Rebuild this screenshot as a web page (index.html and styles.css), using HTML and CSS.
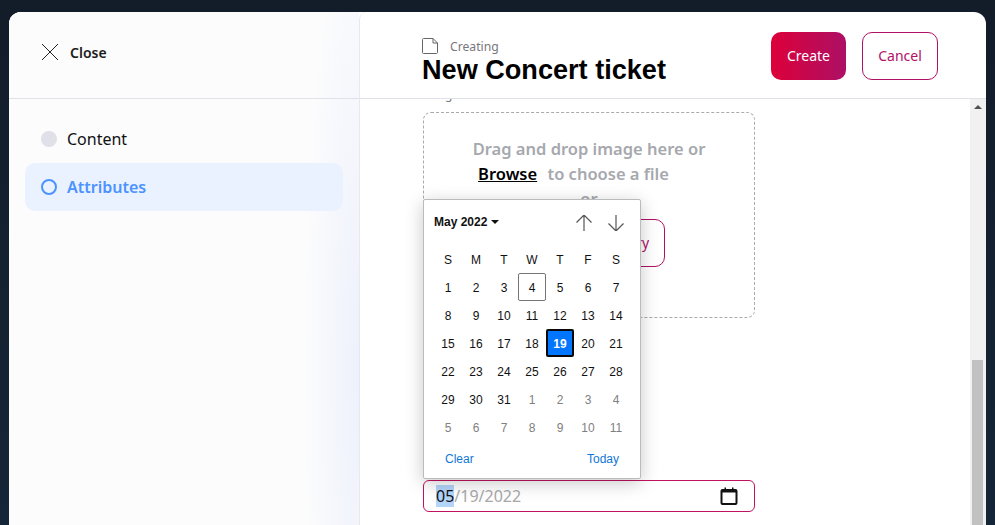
FILE: index.html
```html
<!DOCTYPE html>
<html lang="en">
<head>
	<meta charset="UTF-8">
	<title>New Concert ticket</title>
	<link rel="stylesheet" href="styles.css">
</head>
<body>
	<div class="panel">
		<div class="side">
			<div class="side-head">
				<svg class="close-icon" width="18" height="18" viewBox="0 0 18 18"><path d="M1 1L17 17M17 1L1 17" stroke="#222" stroke-width="1" fill="none"/></svg>
				<span class="close-text">Close</span>
			</div>
			<div class="steps">
				<div class="step"><i class="dot"></i>Content</div>
				<div class="step active"><i class="dot"></i>Attributes</div>
			</div>
		</div>
		<div class="main">
			<div class="main-head">
				<div class="title-box">
					<div class="crumb">
						<svg width="16" height="16" viewBox="0 0 16 16"><path d="M1.5 .5H11L15.5 5V14.5a1 1 0 0 1-1 1H1.5a1 1 0 0 1-1-1V1.500a1 1 0 0 1 1-1ZM11 .5V5H15.5" stroke="#666" fill="#fff"/></svg>
						<span>Creating</span>
					</div>
					<h1>New Concert ticket</h1>
				</div>
				<button class="btn btn-create">Create</button>
				<button class="btn btn-cancel">Cancel</button>
			</div>
			<div class="main-body">
				<div class="form">
					<div class="field-label">Image</div>
					<div class="drop">
						<p>Drag and drop image here or</p>
						<p class="browse-line"><a>Browse</a> to choose a file</p>
						<p>or</p>
						<button class="btn btn-cancel btn-library">Select from library</button>
					</div>
					<div class="date-wrap">
						<div class="date-input">
							<span class="date-val"><b>05</b>/19/2022</span>
							<svg width="18" height="18" viewBox="0 0 18 18"><path d="M2.500 3H15.500A1 1 0 0 1 16.500 4V16A1 1 0 0 1 15.500 17H2.500A1 1 0 0 1 1.500 16V4A1 1 0 0 1 2.500 3Z" stroke="#111" stroke-width="2" fill="#fff"/><path d="M1.500 3H16.500V5.500H1.500ZM4.500 .5H6V3H4.500ZM12 .5H13.500V3H12Z" fill="#111"/></svg>
						</div>
						<div class="picker">
							<div class="picker-head">
								<span class="month">May 2022 <i class="caret"></i></span>
								<svg width="16" height="16" viewBox="0 0 16 16"><path d="M8 0V16M.5 7.500L8 0L15.500 7.500" stroke="#555" stroke-width="1.200" fill="none"/></svg>
								<svg width="16" height="16" viewBox="0 0 16 16"><path d="M8 0V16M.5 8.500L8 16L15.500 8.500" stroke="#555" stroke-width="1.200" fill="none"/></svg>
							</div>
							<div class="cal">
								<span>S</span><span>M</span><span>T</span><span>W</span><span>T</span><span>F</span><span>S</span>
								<span>1</span><span>2</span><span>3</span><span class="now">4</span><span>5</span><span>6</span><span>7</span>
								<span>8</span><span>9</span><span>10</span><span>11</span><span>12</span><span>13</span><span>14</span>
								<span>15</span><span>16</span><span>17</span><span>18</span><span class="sel">19</span><span>20</span><span>21</span>
								<span>22</span><span>23</span><span>24</span><span>25</span><span>26</span><span>27</span><span>28</span>
								<span>29</span><span>30</span><span>31</span><span class="off">1</span><span class="off">2</span><span class="off">3</span><span class="off">4</span>
								<span class="off">5</span><span class="off">6</span><span class="off">7</span><span class="off">8</span><span class="off">9</span><span class="off">10</span><span class="off">11</span>
							</div>
							<div class="picker-foot"><a>Clear</a><a>Today</a></div>
						</div>
					</div>
				</div>
				<div class="scrollbar"><i class="arrow"></i><i class="thumb"></i></div>
			</div>
		</div>
	</div>
</body>
</html>
```
FILE: styles.css
```css
*{
	margin:0;
	padding:0;
	box-sizing:border-box;
}
html,body{
	width:100%;
	height:100%;
}
body{
	background:linear-gradient(#131c29,#152638);
	overflow:hidden;
	padding:12px 9px 0;
	font-family:"Noto Sans",sans-serif;
}
.panel{
	display:flex;
	height:100%;
	background:#fff;
	border-radius:12px 12px 0 0;
	overflow:hidden;
}
.side{
	width:350px;
	flex:none;
	background:radial-gradient(ellipse 55px 480px at 100% 70%,#edf1fb,#fcfcfd) #fcfcfd;
}
.side-head{
	height:87px;
	border-bottom:1px solid #e1e1ec;
	display:flex;
	align-items:center;
	padding:0 0 6px 32px;
}
.close-text{
	margin-left:11px;
	font-size:14px;
	font-weight:600;
	color:#1c1c1c;
}
.steps{
	padding:16px 16px 0 16px;
	display:flex;
	flex-direction:column;
}
.step{
	height:48px;
	display:flex;
	align-items:center;
	padding-left:16px;
	font-size:16px;
	color:#111;
	border-radius:10px;
}
.dot{
	width:16px;
	height:16px;
	border-radius:50%;
	background:#e0e0e8;
	margin-right:10px;
}
.step.active{
	background:#e9f2fe;
	color:#4c93ff;
	font-weight:600;
}
.step.active .dot{
	background:none;
	border:2px solid #4c93ff;
}
.main{
	flex:1;
	min-width:0;
	display:flex;
	flex-direction:column;
	border-left:1px solid #e8e8f2;
	border-top-left-radius:8px;
}
.main-head{
	height:87px;
	flex:none;
	border-bottom:1px solid #e1e1ec;
	display:flex;
	align-items:flex-start;
	padding:20px 48px 0 62px;
}
.title-box{
	flex:1;
	padding-top:6px;
}
.crumb{
	display:flex;
	align-items:center;
	gap:12px;
	height:16px;
	font-size:12.200px;
	color:#77777c;
}
.crumb svg{
	flex:none;
}
h1{
	font-family:"Liberation Sans",Arial,sans-serif;
	font-size:27.100px;
	line-height:30px;
	margin-top:1px;
	font-weight:700;
	color:#000;
}
.btn{
	height:48px;
	border-radius:10px;
	font-family:"Noto Sans",sans-serif;
	font-size:14px;
	padding-bottom:2px;
	background:#fff;
	border:1px solid #b01065;
	color:#b01065;
}
.btn-create{
	width:75px;
	border:0;
	color:#fff;
	background:linear-gradient(90deg,#dd0039,#ad1066);
}
.btn-cancel{
	width:76px;
	margin-left:16px;
}
.main-body{
	flex:1;
	min-height:0;
	display:flex;
	overflow:hidden;
}
.form{
	flex:1;
	min-width:0;
	padding-left:63px;
	margin-top:-11px;
}
.field-label{
	width:332px;
	height:24px;
	font-size:12px;
	line-height:14px;
	color:#77777c;
}
.drop{
	width:332px;
	height:206px;
	border:1px dashed #aaa;
	border-radius:8px;
	padding-top:23px;
	text-align:center;
	font-size:16.500px;
	font-weight:600;
	line-height:25px;
	color:#a6a8ae;
}
.browse-line{
	padding-right:31px;
}
.drop a{
	color:#000;
	text-decoration:underline;
	margin-right:6px;
}
.btn-library{
	display:block;
	width:152px;
	margin:8px auto 0;
	font-weight:400;
}
.date-wrap{
	position:relative;
	width:332px;
	margin-top:162px;
}
.date-input{
	height:32px;
	border:1.500px solid #c0125f;
	border-radius:6px;
	display:flex;
	align-items:center;
	justify-content:space-between;
	padding:0 16px 0 12px;
	font-size:16px;
	color:#a8a8a8;
}
.date-val b{
	font-weight:400;
	color:#111;
	background:#b4d5fb;
}
.picker{
	position:absolute;
	left:0;
	bottom:33px;
	width:218px;
	height:280px;
	background:#fff;
	border:1px solid #bbb;
	border-radius:2px;
	box-shadow:0 4px 18px rgba(0,0,0,.22);
	font-family:"Liberation Sans",Arial,sans-serif;
	font-size:12px;
	color:#111;
	padding:0 10px;
}
.picker-head{
	height:44px;
	display:flex;
	align-items:center;
	gap:16px;
	padding:2px 6px 0 0;
}
.month{
	flex:1;
	font-weight:700;
	margin-bottom:2px;
}
.caret{
	display:inline-block;
	border:4px solid transparent;
	border-top-color:#111;
	border-bottom:0;
	vertical-align:2px;
}
.cal{
	display:grid;
	grid-template-columns:repeat(7,28px);
	grid-auto-rows:28px;
	margin-top:1px;
}
.cal span{
	display:flex;
	align-items:center;
	justify-content:center;
	border-radius:2px;
	padding-top:1px;
}
.cal .off{
	color:#808080;
}
.cal .now{
	border:1px solid #767676;
}
.cal .sel{
	background:#0075ff;
	border:2px solid #0a0a0a;
	color:#fff;
	font-weight:700;
}
.picker-foot{
	display:flex;
	justify-content:space-between;
	padding:11px 11px 0;
	color:#1177d8;
}
.scrollbar{
	width:16px;
	flex:none;
	background:#f1f1f1;
	position:relative;
}
.arrow{
	position:absolute;
	left:4px;
	top:6px;
	border:4px solid transparent;
	border-bottom-color:#505050;
	border-top:0;
}
.thumb{
	position:absolute;
	left:2px;
	right:3px;
	top:261px;
	bottom:0;
	background:#c1c1c1;
}
```
